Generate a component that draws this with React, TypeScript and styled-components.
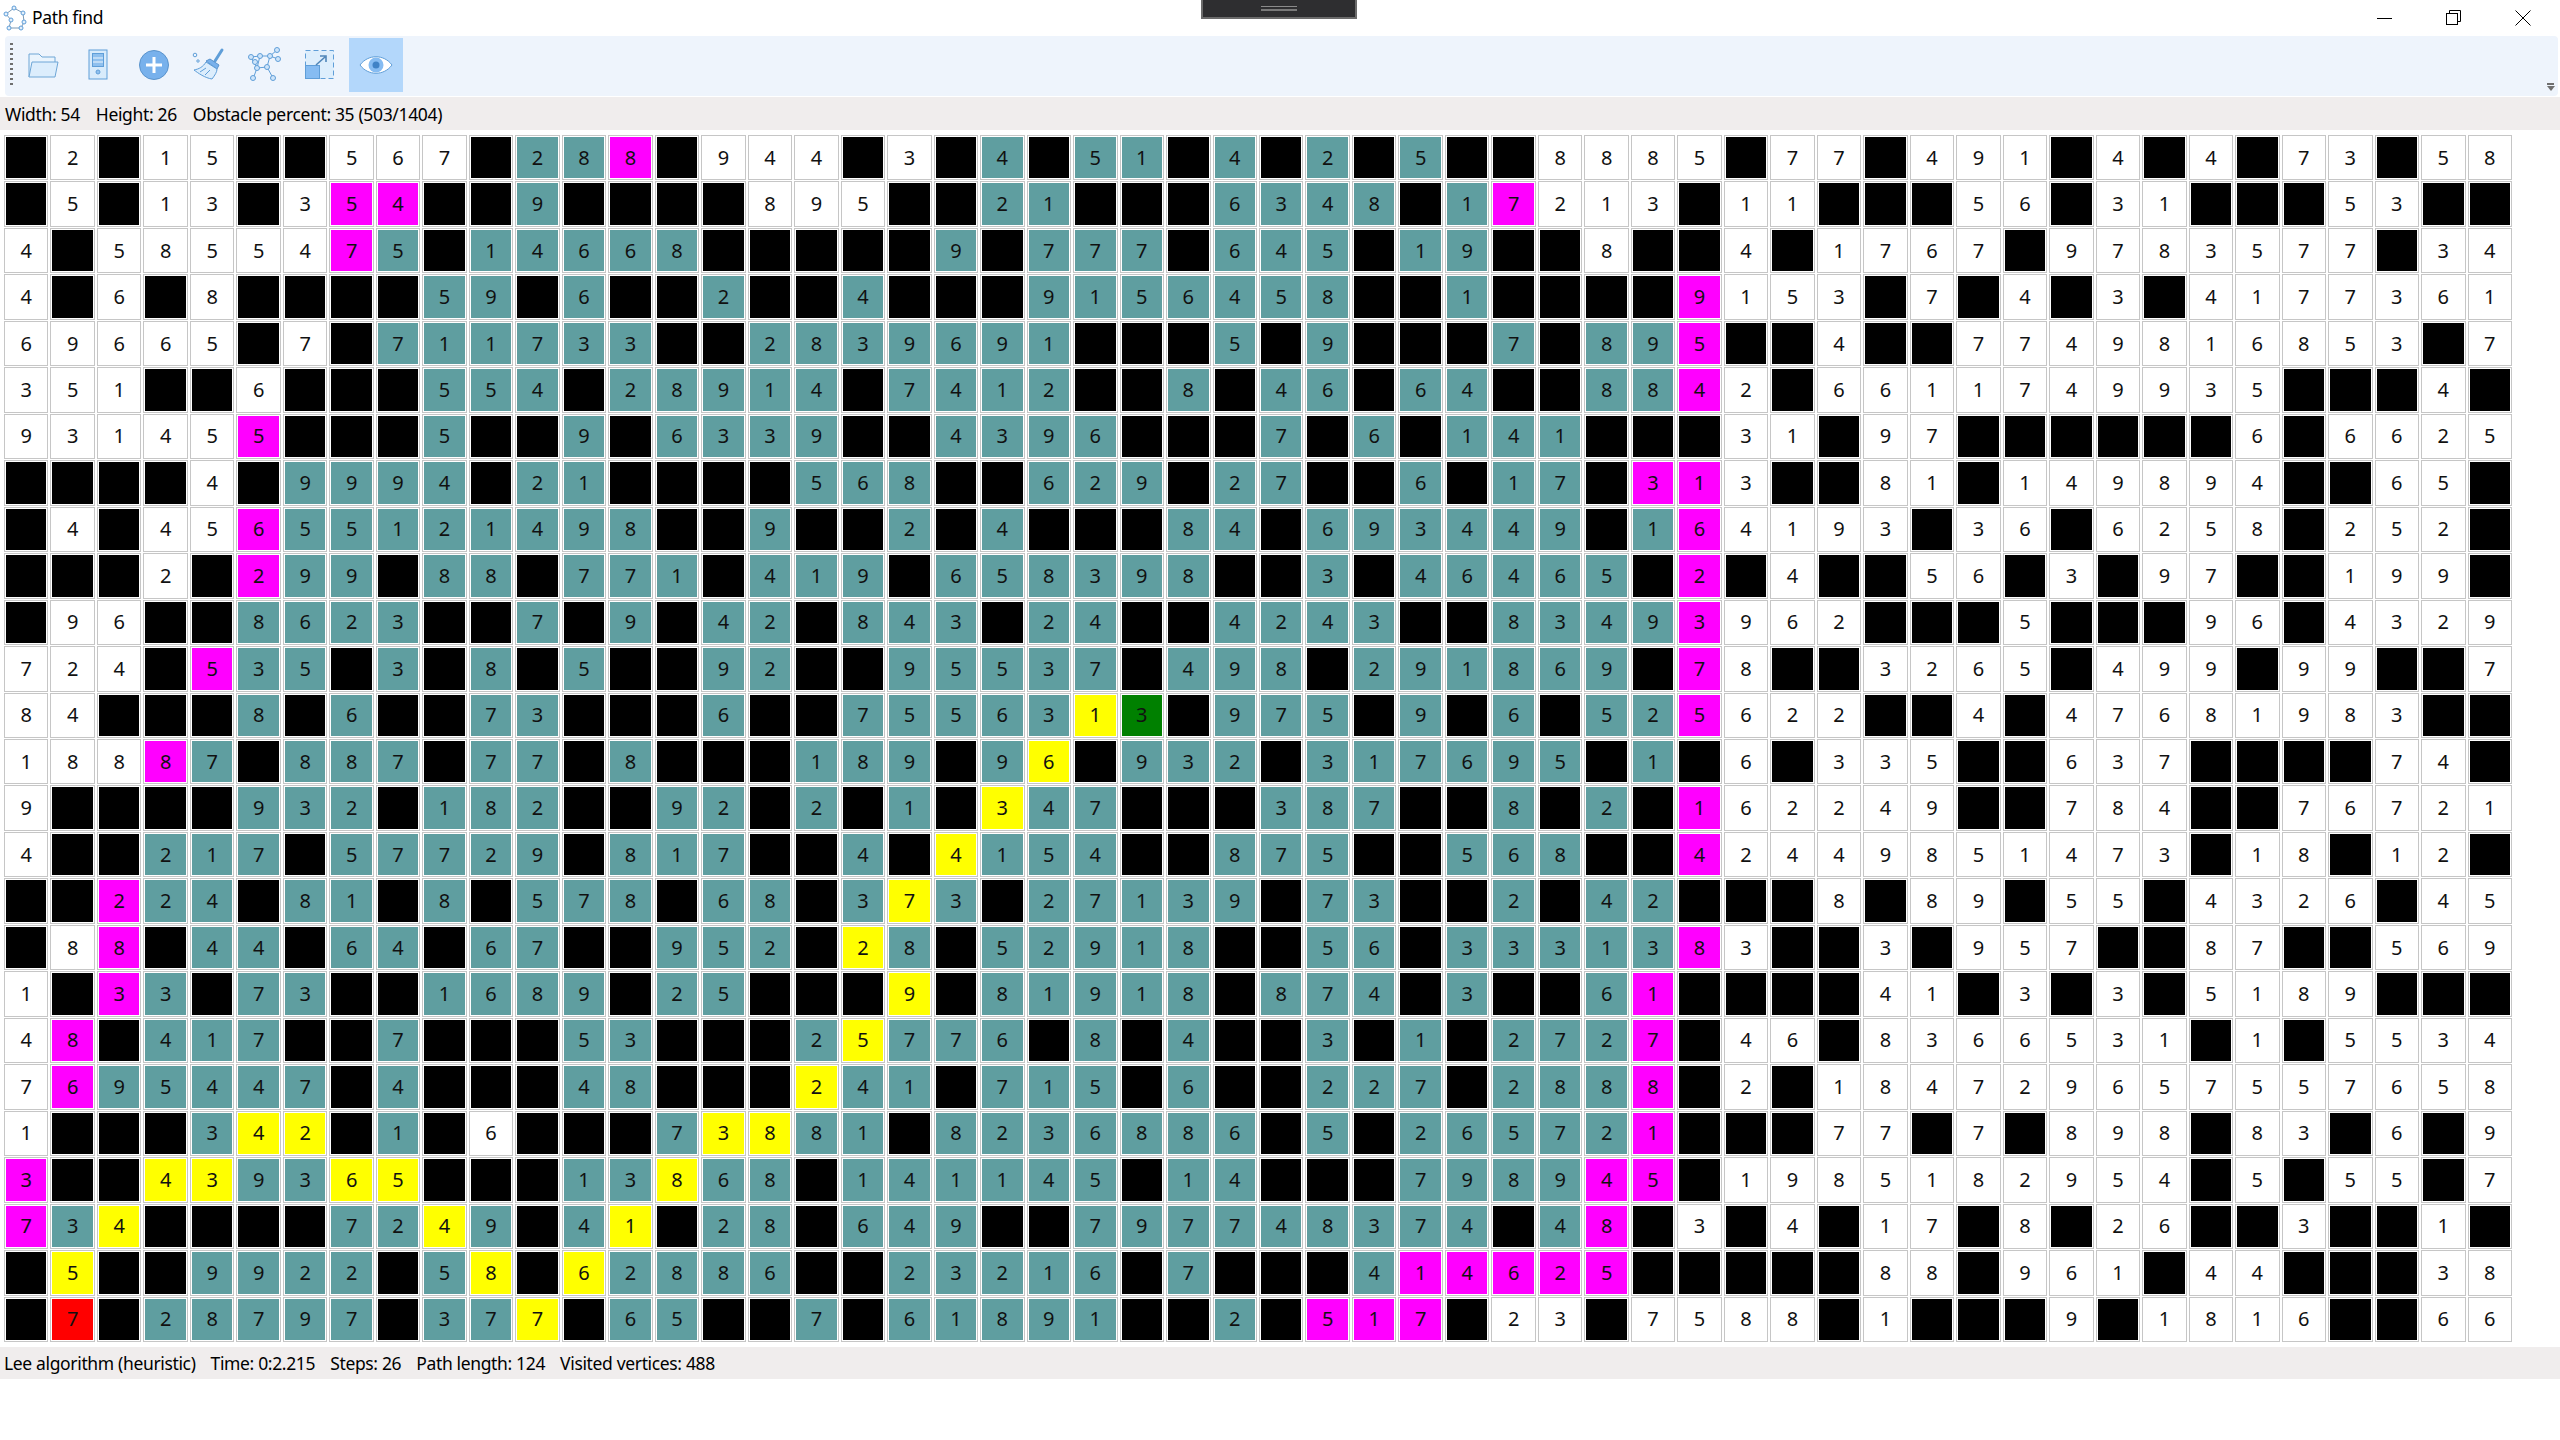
import * as React from 'react'
import styled, { createGlobalStyle } from 'styled-components'

type CellKind = 'w' | 't' | 'm' | 'y' | 'r' | 'g' | '.'

const FILLS: Record<CellKind, string> = {
  w: '#ffffff',
  t: '#5f9ea0',
  m: '#ff00ff',
  y: '#ffff00',
  r: '#ff0000',
  g: '#008000',
  '.': '#000000',
}

// '.' is an obstacle, both grids are 54 x 26
const VALUES = [
  '.2.15..567.288.944' + '.3.4.51.4.2.5..8885' + '.77.491.4.4.73.58',
  '.5.13.354..9....89' + '5..21...6348.17213.' + '11...56.31...53..',
  '4.5855475.14668...' + '..9.777.645.19..8..' + '4.1767.9783577.34',
  '4.6.8....59.6..2..' + '4...9156458..1....9' + '153.7.4.3.4177361',
  '69665.7.711733..28' + '39691...5.9...7.895' + '..4..7749816853.7',
  '351..6...554.28914' + '.7412..8.46.64..884' + '2.6611749935...4.',
  '931455...5..9.6339' + '..4396...7.6.141...' + '31.97......6.6625',
  '....4.9994.21....5' + '68..629.27..6.17.31' + '3..81.149894..65.',
  '.4.45655121498..9.' + '.2.4...84.693449.16' + '4193.36.6258.252.',
  '...2.299.88.771.41' + '9.658398..3.46465.2' + '.4..56.3.97..199.',
  '.96..8623..7.9.42.' + '843.24..4243..83493' + '962...5...96.4329',
  '724.535.3.8.5..92.' + '.95537.498.291869.7' + '8..3265.499.99..7',
  '84...8.6..73...6..' + '7556313.975.9.6.525' + '622..4.47681983..',
  '18887.887.77.8...1' + '89.96.932.317695.1.' + '6.335..637....74.',
  '9....932.182..92.2' + '.1.347...387..8.2.1' + '62249..784..76721',
  '4..217.57729.817..' + '4.4154..875..568..4' + '2449851473.18.12.',
  '..224.81.8.578.68.' + '373.27139.73..2.42.' + '..8.89.55.4326.45',
  '.88.44.64.67..952.' + '28.52918..56.333138' + '3..3.957..87..569',
  '1.33.73..1689.25..' + '.9.81918.874.3..61.' + '...41.3.3.5189...',
  '48.417..7...53...2' + '5776.8.4..3.1.2727.' + '46.8366531.1.5534',
  '7695447.4...48...2' + '41.715.6..227.2888.' + '2.184729657557658',
  '1...342.1.6...7388' + '1.8236886.5.265721.' + '..77.7.898.83.6.9',
  '3..439365...13868.' + '141145.14...798945.' + '1985182954.5.55.7',
  '734....7249.41.28.' + '649..797748374.48.3' + '.4.17.8.26..3..1.',
  '.5..9922.58.62886.' + '.23216.7...414625..' + '...88.961.44...38',
  '.7.28797.377.65..7' + '.61891..2.517.23.75' + '88.1...9.1816..66',
]

const KINDS = [
  '.w.ww..www.ttm.www' + '.w.t.tt.t.t.t..wwww' + '.ww.www.w.w.ww.ww',
  '.w.ww.wmm..t....ww' + 'w..tt...tttt.tmwww.' + 'ww...ww.ww...ww..',
  'w.wwwwwmt.ttttt...' + '..t.ttt.ttt.tt..w..' + 'w.wwww.wwwwwww.ww',
  'w.w.w....tt.t..t..' + 't...ttttttt..t....m' + 'www.w.w.w.wwwwwww',
  'wwwww.w.tttttt..tt' + 'ttttt...t.t...t.ttm' + '..w..wwwwwwwwww.w',
  'www..w...ttt.ttttt' + '.tttt..t.tt.tt..ttm' + 'w.wwwwwwwwww...w.',
  'wwwwwm...t..t.tttt' + '..tttt...t.t.ttt...' + 'ww.ww......w.wwww',
  '....w.tttt.tt....t' + 'tt..ttt.tt..t.tt.mm' + 'w..ww.wwwwww..ww.',
  '.w.wwmtttttttt..t.' + '.t.t...tt.tttttt.tm' + 'wwww.ww.wwww.www.',
  '...w.mtt.tt.ttt.tt' + 't.tttttt..t.ttttt.m' + '.w..ww.w.ww..www.',
  '.ww..tttt..t.t.tt.' + 'ttt.tt..tttt..ttttm' + 'www...w...ww.wwww',
  'www.mtt.t.t.t..tt.' + '.ttttt.ttt.tttttt.m' + 'w..wwww.www.ww..w',
  'ww...t.t..tt...t..' + 'tttttyg.ttt.t.t.ttm' + 'www..w.wwwwwwww..',
  'wwwmt.ttt.tt.t...t' + 'tt.ty.ttt.tttttt.t.' + 'w.www..www....ww.',
  'w....ttt.ttt..tt.t' + '.t.ytt...ttt..t.t.m' + 'wwwww..www..wwwww',
  'w..ttt.ttttt.ttt..' + 't.yttt..ttt..ttt..m' + 'wwwwwwwwww.ww.ww.',
  '..mtt.tt.t.ttt.tt.' + 'tyt.ttttt.tt..t.tt.' + '..w.ww.ww.wwww.ww',
  '.wm.tt.tt.tt..ttt.' + 'yt.ttttt..tt.tttttm' + 'w..w.www..ww..www',
  'w.mt.tt..tttt.tt..' + '.y.ttttt.ttt.t..tm.' + '...ww.w.w.wwww...',
  'wm.ttt..t...tt...t' + 'yttt.t.t..t.t.tttm.' + 'ww.wwwwwww.w.wwww',
  'wmttttt.t...tt...y' + 'tt.ttt.t..ttt.tttm.' + 'w.wwwwwwwwwwwwwww',
  'w...tyy.t.w...tyyt' + 't.ttttttt.t.tttttm.' + '..ww.w.www.ww.w.w',
  'm..yyttyy...ttytt.' + 'tttttt.tt...ttttmm.' + 'wwwwwwwwww.w.ww.w',
  'mty....ttyt.ty.tt.' + 'ttt..ttttttttt.tm.w' + '.w.ww.w.ww..w..w.',
  '.y..tttt.ty.ytttt.' + '.ttttt.t...tmmmmm..' + '...ww.www.ww...ww',
  '.r.ttttt.tty.tt..t' + '.ttttt..t.mmm.ww.ww' + 'ww.w...w.wwww..ww',
]

const GlobalStyle = createGlobalStyle`
  html, body {
    margin: 0;
    background: #ffffff;
  }
`

const Window = styled.div`
  position: relative;
  width: 2560px;
  height: 1440px;
  overflow: hidden;
  display: flex;
  flex-direction: column;
  font-family: "Noto Sans", "Open Sans", sans-serif;
  color: #000000;
`

const TitleBar = styled.div`
  height: 36px;
  display: flex;
  align-items: center;
  padding-left: 3px;
  gap: 5px;
  font-size: 17.5px;
  letter-spacing: -0.35px;
`

const TitleText = styled.span`
  line-height: 34px;
  padding-bottom: 2px;
`

const WindowButtons = styled.div`
  margin-left: auto;
  margin-right: 3px;
  display: flex;
`

const WindowButton = styled.div`
  width: 69px;
  height: 34px;
  display: flex;
  align-items: center;
  justify-content: center;
`

const Notch = styled.div`
  position: absolute;
  left: 1201px;
  top: 0;
  width: 156px;
  height: 19px;
  box-sizing: border-box;
  background: #2e2e30;
  border: 2px solid #6b6b6b;
  border-top: 0;
  display: flex;
  align-items: center;
  justify-content: center;
`

const NotchHandle = styled.div`
  width: 36px;
  height: 5px;
  box-sizing: border-box;
  border-top: 1px solid #8a8a8a;
  border-bottom: 2px solid #7a7a7a;
`

const ToolBar = styled.div`
  height: 60px;
  margin: 0 2px 0 5px;
  padding-left: 5px;
  display: flex;
  align-items: flex-start;
  background: #eef4fc;
  border-radius: 4px;
`

const Grip = styled.div`
  width: 3px;
  height: 44px;
  margin: 7px 1.5px 0 0;
  background: repeating-linear-gradient(to bottom, #6f6f6f 0 2px, transparent 2px 5px);
`

const ToolButton = styled.div<{ $active?: boolean }>`
  width: 54px;
  height: 54px;
  margin: 2px 0.5px 0 1px;
  display: flex;
  align-items: center;
  justify-content: center;
  background: ${(props) => (props.$active ? '#b3d7fb' : 'transparent')};
`

const OverflowButton = styled.div`
  margin: auto 4px 5px auto;
  width: 7px;
  display: flex;
  flex-direction: column;
  align-items: center;
  gap: 1px;
`

const OverflowBar = styled.div`
  width: 7px;
  height: 2px;
  background: #6f6f6f;
`

const OverflowArrow = styled.div`
  width: 0;
  height: 0;
  border-left: 4px solid transparent;
  border-right: 4px solid transparent;
  border-top: 5px solid #6f6f6f;
`

const InfoBar = styled.div`
  height: 33px;
  margin-top: 1px;
  padding-left: 5px;
  display: flex;
  align-items: center;
  gap: 16px;
  background: #f0eded;
  font-size: 17.5px;
  letter-spacing: -0.35px;
`

const Board = styled.div`
  width: 2510px;
  height: 1208px;
  margin: 4px 0 5px 3px;
  display: grid;
  grid-template-columns: repeat(54, 1fr);
  grid-template-rows: repeat(26, 1fr);
`

const Cell = styled.div<{ $kind: CellKind }>`
  margin: 1px 1px 0 1px;
  display: flex;
  align-items: center;
  justify-content: center;
  border: 1px solid #c6c6c6;
  padding: 1px;
  background-color: ${(props) => FILLS[props.$kind]};
  background-clip: content-box;
  font-size: 20px;
  line-height: 1;
  color: #111111;
`

const StatusBar = styled(InfoBar)`
  height: 32px;
  margin-top: 0;
  padding-left: 4px;
  gap: 15px;
`

const GraphIcon = () => (
  <svg width="24" height="26" viewBox="0 0 24 26">
    <path d="M11 3 L20 8 L21 17 L18 23 L6 23 L8 15 L3 9 Z" fill="none" stroke="#7d9ab5" strokeWidth="1" />
    <g fill="#e4f0fb" stroke="#5f9ed8" strokeWidth="1">
      <circle cx="11" cy="3" r="2" />
      <circle cx="20" cy="8" r="2" />
      <circle cx="21" cy="17" r="2" />
      <circle cx="18" cy="23" r="2" />
      <circle cx="6" cy="23" r="2" />
      <circle cx="8" cy="15" r="2" />
      <circle cx="3" cy="9" r="2" />
    </g>
  </svg>
)

const FolderIcon = () => (
  <svg width="36" height="36" viewBox="0 0 36 36">
    <path d="M4 30 V7 H14 L17 10 H30 V15" fill="#eaf4fd" stroke="#6ea6d6" />
    <path d="M4 30 L7 15 H33 L30 30 Z" fill="#dcedfc" stroke="#6ea6d6" />
  </svg>
)

const ServerIcon = () => (
  <svg width="36" height="36" viewBox="0 0 36 36">
    <rect x="9" y="3" width="18" height="29" fill="#d8ebfb" stroke="#5f9ed8" />
    <rect x="12.5" y="6.5" width="11" height="13" fill="#8fc0ee" stroke="#5f9ed8" />
    <path d="M13 11 H23 M13 15 H23" stroke="#eef6fd" />
    <circle cx="18" cy="25" r="2" fill="#8fc0ee" stroke="#5f9ed8" />
  </svg>
)

const PlusIcon = () => (
  <svg width="36" height="36" viewBox="0 0 36 36">
    <circle cx="18" cy="18" r="14.5" fill="#78b1ec" stroke="#5a93cc" />
    <path d="M18 10 V26 M10 18 H26" stroke="#ffffff" strokeWidth="3" />
  </svg>
)

const BrushIcon = () => (
  <svg width="36" height="36" viewBox="0 0 36 36">
    <path d="M31 3 L24 14" stroke="#5f9ed8" strokeWidth="3" strokeLinecap="round" />
    <path d="M19 12 L28 18 L26 22 L15 14 Z" fill="#78b1ec" stroke="#5a93cc" />
    <path d="M15 15 C12 20 8 22 3 23 C7 26 14 31 21 32 C24 28 26 25 26 22 Z" fill="#dcedfc" stroke="#5f9ed8" />
    <path d="M9 25 L15 21 M14 28 L19 23" stroke="#5f9ed8" />
    <circle cx="4" cy="8" r="1.8" fill="#eef4fc" stroke="#5f9ed8" />
    <circle cx="7" cy="14" r="1.2" fill="#eef4fc" stroke="#5f9ed8" />
  </svg>
)

const NetworkIcon = () => (
  <svg width="36" height="36" viewBox="0 0 36 36">
    <path
      d="M4 10 L10 21 L6 32 M4 10 L13 9 L23 9 L30 3 M23 9 L31 12 M23 9 L20 20 L26 31 M10 21 L20 20 M13 9 L10 21 M7 15 L4 10"
      fill="none"
      stroke="#5f9ed8"
    />
    <g fill="#cfe5fa" stroke="#5f9ed8">
      <circle cx="4" cy="10" r="2.5" />
      <circle cx="13" cy="9" r="2.5" />
      <circle cx="23" cy="9" r="2.5" />
      <circle cx="30" cy="3" r="2.5" />
      <circle cx="31" cy="12" r="2.5" />
      <circle cx="8" cy="15" r="2.5" />
      <circle cx="10" cy="21" r="2.5" />
      <circle cx="20" cy="20" r="2.5" />
      <circle cx="6" cy="31" r="2.5" />
      <circle cx="26" cy="31" r="2.5" />
    </g>
  </svg>
)

const ResizeIcon = () => (
  <svg width="36" height="36" viewBox="0 0 36 36">
    <rect x="3.5" y="3.5" width="28" height="28" fill="#ddeefc" stroke="#5f9ed8" strokeDasharray="5 3" />
    <rect x="3.5" y="18.5" width="14" height="13" fill="#86bcf2" stroke="#5f9ed8" />
    <path d="M14 18 L23 10 M18 9 H24 V15" fill="none" stroke="#4f85b8" strokeWidth="1.6" />
  </svg>
)

const EyeIcon = () => (
  <svg width="36" height="36" viewBox="0 0 36 36">
    <path d="M2 18 C10 7 26 7 34 18 C26 29 10 29 2 18 Z" fill="#ffffff" stroke="#5f9ed8" />
    <circle cx="18" cy="18" r="7.5" fill="#86bcf2" />
    <circle cx="18" cy="18" r="3.5" fill="#3f82c6" />
  </svg>
)

const MinimizeGlyph = () => (
  <svg width="16" height="16" viewBox="0 0 16 16">
    <path d="M0 8.5 H15" stroke="#000000" fill="none" />
  </svg>
)

const RestoreGlyph = () => (
  <svg width="16" height="16" viewBox="0 0 16 16">
    <rect x="0.5" y="3.5" width="11" height="11" fill="none" stroke="#000000" />
    <path d="M3.5 3 V0.5 H14.5 V11.5 H12" fill="none" stroke="#000000" />
  </svg>
)

const CloseGlyph = () => (
  <svg width="16" height="16" viewBox="0 0 16 16">
    <path d="M0.5 0.5 L15.5 15.5 M15.5 0.5 L0.5 15.5" fill="none" stroke="#000000" />
  </svg>
)

export default function App(): JSX.Element {
  return (
    <Window>
      <GlobalStyle />
      <TitleBar>
        <GraphIcon />
        <TitleText>Path find</TitleText>
        <WindowButtons>
          <WindowButton><MinimizeGlyph /></WindowButton>
          <WindowButton><RestoreGlyph /></WindowButton>
          <WindowButton><CloseGlyph /></WindowButton>
        </WindowButtons>
      </TitleBar>
      <Notch>
        <NotchHandle />
      </Notch>
      <ToolBar>
        <Grip />
        <ToolButton><FolderIcon /></ToolButton>
        <ToolButton><ServerIcon /></ToolButton>
        <ToolButton><PlusIcon /></ToolButton>
        <ToolButton><BrushIcon /></ToolButton>
        <ToolButton><NetworkIcon /></ToolButton>
        <ToolButton><ResizeIcon /></ToolButton>
        <ToolButton $active><EyeIcon /></ToolButton>
        <OverflowButton>
          <OverflowBar />
          <OverflowArrow />
        </OverflowButton>
      </ToolBar>
      <InfoBar>
        <span>Width: 54</span>
        <span>Height: 26</span>
        <span>Obstacle percent: 35 (503/1404)</span>
      </InfoBar>
      <Board>
        {VALUES.map((row, y) =>
          row.split('').map((value, x) => (
            <Cell key={`${x}-${y}`} $kind={KINDS[y][x] as CellKind}>
              {value === '.' ? '' : value}
            </Cell>
          )),
        )}
      </Board>
      <StatusBar>
        <span>Lee algorithm (heuristic)</span>
        <span>Time: 0:2.215</span>
        <span>Steps: 26</span>
        <span>Path length: 124</span>
        <span>Visited vertices: 488</span>
      </StatusBar>
    </Window>
  )
}
